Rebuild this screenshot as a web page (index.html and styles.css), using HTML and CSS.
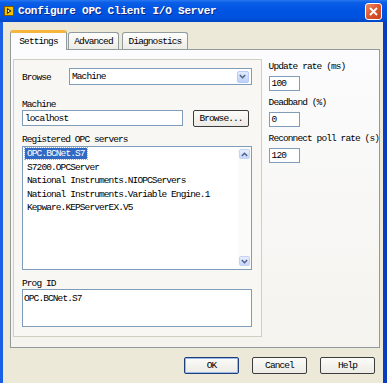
FILE: index.html
```html
<!DOCTYPE html>
<html lang="en">
<head>
    <meta charset="UTF-8">
    <title>Configure OPC Client I/O Server</title>
    <link rel="stylesheet" href="styles.css">
</head>
<body>
    <div class="window">
        <div class="titlebar">
            <svg class="app-icon" width="10" height="10" viewBox="0 0 10 10">
                <rect x="0.5" y="0.5" width="9" height="9" fill="#f2c200" stroke="#7a5a00"/>
                <path d="M3 2 L7.5 5 L3 8 Z" fill="#111"/>
                <path d="M3.8 3.6 L5.9 5 L3.8 6.4 Z" fill="#fff"/>
            </svg>
            <span class="title">Configure OPC Client I/O Server</span>
            <div class="close-btn">
                <svg width="9" height="9" viewBox="0 0 9 9">
                    <path d="M1 1 L8 8 M8 1 L1 8" stroke="#fff" stroke-width="1.8"/>
                </svg>
            </div>
        </div>

        <div class="frame">
            <div class="tabs">
                <div class="tab tab-active">Settings</div>
                <div class="tab tab-adv">Advanced</div>
                <div class="tab tab-diag">Diagnostics</div>
            </div>

            <div class="tab-panel">
                <div class="main-box">
                    <div class="browse-row">
                        <span class="browse-label">Browse</span>
                        <div class="dropdown">
                            <span>Machine</span>
                            <div class="drop-arrow">
                                <svg width="7" height="5" viewBox="0 0 7 5">
                                    <path d="M0.8 1 L3.5 3.8 L6.2 1" stroke="#4d6185" stroke-width="1.4" fill="none"/>
                                </svg>
                            </div>
                        </div>
                    </div>

                    <div class="field-label label-machine">Machine</div>
                    <div class="machine-row">
                        <div class="text-input machine-input">localhost</div>
                        <div class="btn btn-browse">Browse...</div>
                    </div>

                    <div class="field-label label-servers">Registered OPC servers</div>
                    <div class="listbox">
                        <div class="list-items">
                            <div class="list-item"><span class="selected">OPC.BCNet.S7</span></div>
                            <div class="list-item">S7200.OPCServer</div>
                            <div class="list-item">National Instruments.NIOPCServers</div>
                            <div class="list-item">National Instruments.Variable Engine.1</div>
                            <div class="list-item">Kepware.KEPServerEX.V5</div>
                        </div>
                        <div class="scrollbar">
                            <div class="scroll-btn">
                                <svg width="7" height="5" viewBox="0 0 7 5">
                                    <path d="M0.8 4 L3.5 1.2 L6.2 4" stroke="#4d6185" stroke-width="1.4" fill="none"/>
                                </svg>
                            </div>
                            <div class="scroll-btn">
                                <svg width="7" height="5" viewBox="0 0 7 5">
                                    <path d="M0.8 1 L3.5 3.8 L6.2 1" stroke="#4d6185" stroke-width="1.4" fill="none"/>
                                </svg>
                            </div>
                        </div>
                    </div>

                    <div class="field-label label-prog">Prog ID</div>
                    <div class="text-input prog-box">OPC.BCNet.S7</div>
                </div>

                <div class="side">
                    <div class="side-label">Update rate (ms)</div>
                    <div class="text-input small-input">100</div>
                    <div class="side-label">Deadband (%)</div>
                    <div class="text-input small-input">0</div>
                    <div class="side-label">Reconnect poll rate (s)</div>
                    <div class="text-input small-input">120</div>
                </div>
            </div>

            <div class="actions">
                <div class="btn btn-default">OK</div>
                <div class="btn">Cancel</div>
                <div class="btn">Help</div>
            </div>
        </div>
    </div>
</body>
</html>
```

FILE: styles.css
```css
* {
    box-sizing: border-box;
}
body {
    margin: 0;
    font-family: "Liberation Mono", monospace;
    font-size: 9.5px;
    letter-spacing: -0.9px;
    color: #000;
    background-color: #ece9d8;
}
.window {
    width: 387px;
    height: 383px;
    overflow: hidden;
    display: flex;
    flex-direction: column;
}
.titlebar {
    height: 22px;
    flex-shrink: 0;
    display: flex;
    align-items: center;
    padding: 0 5px 0 4px;
    background: linear-gradient(#2a78f0 0%, #0a5ee6 12%, #0054e3 45%, #0052de 80%, #0046c4 100%);
}
.app-icon {
    flex-shrink: 0;
    margin-right: 4px;
}
.title {
    color: #fff;
    font-weight: bold;
    font-size: 11px;
    letter-spacing: -0.2px;
    text-shadow: 1px 1px 0 #0a2a8a;
    white-space: nowrap;
}
.close-btn {
    margin-left: auto;
    width: 17px;
    height: 17px;
    border: 1px solid #fff;
    border-radius: 3px;
    background: linear-gradient(135deg, #ef8a66, #dc5a30 45%, #c7401a);
    display: flex;
    align-items: center;
    justify-content: center;
}
.frame {
    flex: 1;
    border-left: 3px solid #1a5fe4;
    border-right: 4px solid #0a3cc0;
    background-color: #ece9d8;
    padding: 8px 3px 0 7px;
}
.tabs {
    display: flex;
    align-items: flex-end;
    height: 19px;
}
.tab {
    height: 17px;
    display: flex;
    align-items: center;
    justify-content: center;
    border: 1px solid #919b9c;
    border-bottom: none;
    border-radius: 3px 3px 0 0;
    background: linear-gradient(#fefefe, #ecebe6);
    white-space: nowrap;
}
.tab-active {
    width: 57px;
    height: 20px;
    margin-bottom: -1px;
    position: relative;
    z-index: 1;
    border-top: 3px solid #f6b63c;
    background: #fcfcfe;
}
.tab-adv {
    width: 51px;
    margin-left: 1px;
}
.tab-diag {
    width: 66px;
    margin-left: 3px;
}
.tab-panel {
    height: 299px;
    border: 1px solid #919b9c;
    background: linear-gradient(#fcfcfe, #f4f3ee);
    display: flex;
    padding: 9px 0 10px 2px;
}
.main-box {
    width: 250px;
    border: 1px solid #d0d0bf;
    background-color: #f8f7f3;
    padding: 8px 9px 0 8px;
}
.browse-row {
    display: flex;
    align-items: center;
}
.browse-label {
    width: 47px;
    padding-top: 2px;
}
.dropdown {
    flex: 1;
    height: 17px;
    border: 1px solid #7f9db9;
    background-color: #fff;
    display: flex;
    align-items: center;
    padding: 0 2px 0 2px;
}
.drop-arrow {
    margin-left: auto;
    width: 12px;
    height: 12px;
    border: 1px solid #b9cbf3;
    border-radius: 2px;
    background: linear-gradient(#e3ebfd, #bcd0fa);
    display: flex;
    align-items: center;
    justify-content: center;
}
.field-label {
    line-height: 12px;
    height: 12px;
    padding-top: 1px;
}
.label-machine {
    margin-top: 13px;
}
.label-servers {
    margin-top: 6px;
}
.label-prog {
    margin-top: 7px;
}
.text-input {
    border: 1px solid #7f9db9;
    background-color: #fff;
    padding: 0 2px;
    display: flex;
    align-items: center;
}
.machine-row {
    display: flex;
    gap: 10px;
    align-items: flex-start;
}
.machine-input {
    width: 161px;
    height: 16px;
}
.btn {
    width: 55px;
    height: 17px;
    border: 1px solid #3c3c3c;
    border-radius: 2px;
    background: linear-gradient(#fbfbf9, #ecebe5);
    display: flex;
    align-items: center;
    justify-content: center;
}
.btn-browse {
    width: 56px;
}
.listbox {
    margin-top: 1px;
    height: 124px;
    border: 1px solid #7f9db9;
    background-color: #fff;
    display: flex;
}
.list-items {
    flex: 1;
    padding-left: 2px;
}
.list-item {
    line-height: 13.5px;
    padding-left: 2px;
    white-space: nowrap;
}
.selected {
    background-color: #316ac5;
    color: #fff;
    margin-left: -2px;
    padding: 0 2px;
    outline: 1px dotted #8fb0e8;
}
.scrollbar {
    width: 13px;
    background-color: #fbfbf9;
    display: flex;
    flex-direction: column;
    justify-content: space-between;
    padding: 2px 1px 3px 1px;
}
.scroll-btn {
    height: 10px;
    border: 1px solid #c4d3f3;
    border-radius: 2px;
    background: linear-gradient(#e9effd, #c6d6fb);
    display: flex;
    align-items: center;
    justify-content: center;
}
.prog-box {
    height: 38px;
    align-items: flex-start;
    padding-top: 3px;
    padding-left: 1px;
}
.side {
    margin-left: 7px;
    display: flex;
    flex-direction: column;
    align-items: flex-start;
}
.side-label {
    line-height: 13px;
    height: 13px;
    margin-bottom: 4px;
    padding-top: 1px;
    white-space: nowrap;
}
.small-input {
    width: 31px;
    height: 15px;
    margin-bottom: 4px;
}
.actions {
    display: flex;
    justify-content: flex-end;
    gap: 13px;
    margin-top: 9px;
    padding-right: 5px;
}
.btn-default {
    border-color: #1f3f7a;
    box-shadow: inset 0 0 0 1px #9ab8ec;
}
```
